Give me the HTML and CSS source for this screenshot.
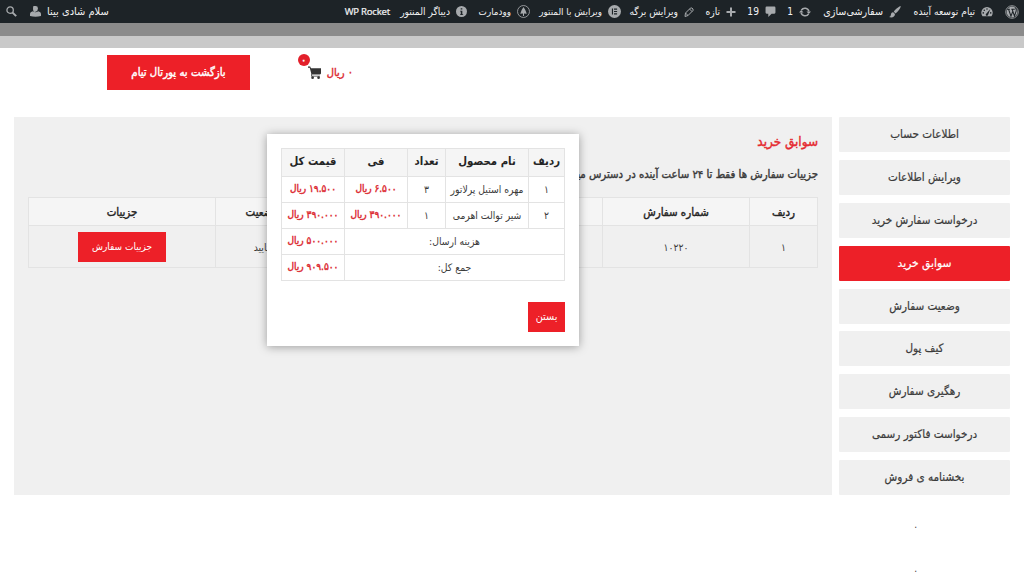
FILE: index.html
```html
<!DOCTYPE html>
<html lang="fa" dir="rtl">
<head>
<meta charset="utf-8">
<title>سوابق خرید</title>
<link rel="stylesheet" href="styles.css">
</head>
<body>
<header class="adminbar">
  <div class="item w-logo"><svg class="i14" viewBox="0 0 20 20"><circle cx="10" cy="10" r="9" fill="none" stroke="currentColor" stroke-width="1.2"/><circle cx="10" cy="10" r="7.7" fill="currentColor"/><path d="M3 6h4M9 6h5M5 6l3.5 10L11 9.500M10.200 6L13.500 16L16 8.500Q16.500 6 15 4" fill="none" stroke="#1d2327" stroke-width="1.500"/></svg></div>
  <div class="item w-site"><svg class="i12" viewBox="0 0 20 20"><path fill="currentColor" d="M2.500 17A9.500 9.500 0 1 1 17.500 17Z"/><g fill="#1d2327"><circle cx="10" cy="5" r="1.300"/><circle cx="5.500" cy="7" r="1.300"/><circle cx="3.800" cy="11.500" r="1.300"/><circle cx="16.200" cy="11.500" r="1.300"/><path d="M15.500 5l-3.600 9.500a2 2 0 1 1-2.800-2z"/></g></svg><span class="label">تیام توسعه آینده</span></div>
  <div class="item w-custom"><svg class="i12" viewBox="0 0 20 20"><path fill="currentColor" d="M19.500 0c-3 .5-9.500 6-11.500 9.500l3 3C14.500 10 19.500 4 19.500 0zM7 10.500c-3.500 0-3.500 3-4 5C2.600 17 1.500 18 0 18.500c5 1.500 10 0 10-5z"/></svg><span class="label l-custom">سفارشی‌سازی</span></div>
  <div class="item w-update"><svg class="i12" viewBox="0 0 20 20"><path fill="none" stroke="currentColor" stroke-width="2.600" d="M4 7a6.800 6.800 0 0 1 12.500 2M16 13a6.800 6.800 0 0 1-12.500-2"/><path fill="currentColor" d="M12.500 9h7.500l-3.700 4.500zM0 11h7.500L3.700 6.500z"/></svg><span class="label">1</span></div>
  <div class="item w-comment"><svg class="i11" viewBox="0 0 20 20"><path fill="currentColor" d="M3 1h14q2 0 2 2v9q0 2-2 2h-5l-6 6v-6H3q-2 0-2-2V3q0-2 2-2z"/></svg><span class="label">19</span></div>
  <div class="item w-new"><svg class="i10" viewBox="0 0 20 20"><path fill="currentColor" d="M8 1h4v7h7v4h-7v7H8v-7H1V8h7z"/></svg><span class="label">تازه</span></div>
  <div class="item w-edit"><svg class="i10" viewBox="0 0 20 20"><path fill="none" stroke="currentColor" stroke-width="2" d="M3 12L13 2q3-1 5 2v3L8 17l-6 2zM3 12l5 5M11 4l5 5"/></svg><span class="label">ویرایش برگه</span></div>
  <div class="item w-elementor"><svg class="i13" viewBox="0 0 20 20"><circle cx="10" cy="10" r="10" fill="currentColor"/><path fill="#1d2327" d="M6 5.500h1.700v9H6zM9.200 5.500H14v1.700H9.200zM9.200 9.100H14v1.700H9.200zM9.200 12.800H14v1.700H9.200z"/></svg><span class="label l-tight">ویرایش با المنتور</span></div>
  <div class="item w-woodmart"><svg class="i13" viewBox="0 0 20 20"><circle cx="10" cy="10" r="9.200" fill="none" stroke="currentColor" stroke-width="1.300"/><path fill="currentColor" d="M10 3l2.800 4.500 2.200 6-4.200-.5v4H9.200v-4L5 13.500l2.200-6z"/></svg><span class="label l-tight">وودمارت</span></div>
  <div class="item w-debug"><svg class="i11" viewBox="0 0 20 20"><circle cx="10" cy="10" r="10" fill="currentColor"/><path fill="#1d2327" d="M8.500 4h3v2.500h-3zM7.500 8.500h4V15H13v1.500H7.500V15h1.200v-5H7.500z"/></svg><span class="label">دیباگر المنتور</span></div>
  <div class="item"><span class="label l-rocket" dir="ltr">WP Rocket</span></div>
  <div class="item account"><span class="label l-hello">سلام شادی بینا</span><svg class="i11" viewBox="0 0 20 20"><path fill="currentColor" d="M10 0q4.500 0 4.500 4.500T10 10.500 5.500 4.500 10 0zM0 18v-4q0-3.500 5-4.500 5 4 10 0 5 1 5 4.500v4q-10 3-20 0z"/></svg></div>
  <div class="item search"><svg class="i11" viewBox="0 0 20 20"><circle cx="7.500" cy="7.500" r="5.800" fill="none" stroke="currentColor" stroke-width="2.400"/><path d="M12 12l6.500 6.500" stroke="currentColor" stroke-width="3.500"/></svg></div>
</header>
<div class="band band-dark"></div>
<div class="band band-light"></div>
<div class="shop-head">
  <a class="cart"><span class="cart-total red">۰ ریال</span>
    <span class="cart-icon"><svg viewBox="0 0 24 24"><path fill="#333" d="M0 1h4l1.500 3H24v9.500q0 2-2 2H7.500V18H22v1.500H6V14L3.200 3H0z"/><circle cx="8.500" cy="21.500" r="2.500" fill="#333"/><circle cx="19.500" cy="21.500" r="2.500" fill="#333"/></svg><span class="badge">۰</span></span>
  </a>
  <a class="portal">بازگشت به پورتال تیام</a>
</div>
<main class="layout">
  <nav class="menu">
    <a>اطلاعات حساب</a><a>ویرایش اطلاعات</a><a>درخواست سفارش خرید</a><a class="active">سوابق خرید</a><a>وضعیت سفارش</a><a>کیف پول</a><a>رهگیری سفارش</a><a>درخواست فاکتور رسمی</a><a>بخشنامه ی فروش</a>
  </nav>
  <section class="panel">
    <h1>سوابق خرید</h1>
    <p class="note">جزییات سفارش ها فقط تا ۲۴ ساعت آینده در دسترس میباشد</p>
    <table class="orders">
      <colgroup><col class="o1"><col class="o2"><col class="o3"><col class="o4"><col class="o5"></colgroup>
      <tr><th>ردیف</th><th>شماره سفارش</th><th></th><th>وضعیت</th><th>جزییات</th></tr>
      <tr><td>۱</td><td>۱۰۲۲۰</td><td></td><td>تایید</td><td><a class="btn details">جزییات سفارش</a></td></tr>
    </table>
    <div class="modal">
      <table class="lines">
        <colgroup><col class="c1"><col class="c2"><col class="c3"><col class="c4"><col class="c5"></colgroup>
        <tr><th>ردیف</th><th>نام محصول</th><th>تعداد</th><th>فی</th><th>قیمت کل</th></tr>
        <tr><td>۱</td><td>مهره استیل پرلاتور</td><td>۳</td><td class="red">۶.۵۰۰ ریال</td><td class="red">۱۹.۵۰۰ ریال</td></tr>
        <tr><td>۲</td><td>شیر توالت اهرمی</td><td>۱</td><td class="red">۳۹۰.۰۰۰ ریال</td><td class="red">۳۹۰.۰۰۰ ریال</td></tr>
        <tr><td colspan="4">هزینه ارسال:</td><td class="red">۵۰۰.۰۰۰ ریال</td></tr>
        <tr><td colspan="4">جمع کل:</td><td class="red">۹۰۹.۵۰۰ ریال</td></tr>
      </table>
      <a class="btn close">بستن</a>
    </div>
  </section>
</main>
<footer class="dots"><p>.</p><p>.</p></footer>
</body>
</html>
```
FILE: styles.css
```css
* { box-sizing: border-box; }
body { margin: 0; width: 1024px; height: 583px; overflow: hidden; background: #fff; color: #3b3b3b; font: 10px "DejaVu Sans Condensed", "DejaVu Sans", sans-serif; font-stretch: condensed; }
svg { display: block; flex: none; }
.adminbar { display: flex; height: 23px; padding: 0 5px 0 6px; background: #1d2327; color: #a7aaad; align-items: center; }
.item { display: flex; align-items: center; gap: 6px; flex: none; white-space: nowrap; }
.label { color: #f0f0f1; font-size: 10.2px; line-height: 23px; }
.l-custom { font-size: 10.7px; }
.l-tight { font-size: 9.8px; }
.i14 { width: 14px; height: 14px; }
.i13 { width: 13px; height: 13px; }
.i12 { width: 12px; height: 12px; }
.i11 { width: 11px; height: 11px; }
.i10 { width: 10px; height: 10px; }
.w-logo { width: 26px; }
.w-site { width: 92px; }
.w-custom { width: 90px; }
.w-update { width: 35px; }
.w-comment { width: 40px; }
.w-new { width: 42px; }
.w-edit { width: 73px; }
.w-elementor { width: 91px; }
.w-woodmart { width: 63px; }
.w-debug { width: 77px; }
.l-rocket { font-family: "Noto Sans", "Open Sans", sans-serif; font-size: 9.5px; letter-spacing: -0.2px; font-stretch: normal; -webkit-text-stroke: 0.2px currentColor; }
.l-hello { font-size: 11px; }
.account { margin-right: auto; }
.search { margin-right: 13px; }
.band-dark { height: 13px; background: #8b8b8b; }
.band-light { height: 12px; background: #c9c9c9; }
.shop-head { display: flex; height: 69px; padding: 7px 671px 0 107px; justify-content: space-between; }
.cart { display: flex; gap: 6px; height: 35px; align-items: center; }
.cart-total { font-size: 11px; white-space: nowrap; }
.cart-icon { position: relative; width: 13px; }
.cart-icon svg { width: 13px; height: 13px; }
.badge { position: absolute; left: -10px; top: -12px; width: 12px; height: 12px; border-radius: 50%; background: #e3202b; color: #fff; font-size: 10px; line-height: 11px; text-align: center; -webkit-text-stroke: 0.6px currentColor; }
.red { color: #dc2a31; }
.cart-total, .portal, .active, .panel h1, .note, .orders th, td.red { -webkit-text-stroke: 0.4px currentColor; font-weight: normal; }
.portal { width: 143px; height: 35px; background: #ed2028; color: #fff; font-size: 11.3px; line-height: 35px; text-align: center; white-space: nowrap; }
.layout { display: flex; gap: 7px; padding: 0 14px; height: 378px; }
.menu { width: 171px; display: flex; flex-direction: column; justify-content: space-between; }
.menu a { height: 35px; background: #f0f0f0; border-radius: 1px; line-height: 35px; text-align: center; font-size: 11.6px; white-space: nowrap; -webkit-text-stroke: 0.2px currentColor; }
.menu .active { background: #ed2028; color: #fff; font-size: 11.9px; }
.panel { position: relative; width: 818px; padding: 14px; background: #f0f0f0; }
.panel h1 { margin: 0; height: 20px; color: #e52a31; font-size: 13.4px; line-height: 21px; }
.note { margin: 13px 0 13px; height: 20px; font-size: 11.3px; line-height: 21px; }
table { border-collapse: collapse; table-layout: fixed; }
th, td { padding: 0; border: 1px solid #e3e3e3; text-align: center; white-space: nowrap; overflow: hidden; }
th { background: #f5f5f5; color: #252525; font-size: 11.3px; }
td { font-size: 10.3px; }
.lines th, .lines td { padding-bottom: 2px; }
td.red { font-size: 10px; }
.orders { width: 789px; }
.orders th { font-size: 11.4px; }
.orders tr:first-child { height: 28px; }
.orders tr + tr { height: 42px; }
.o1 { width: 68px; }
.o2 { width: 147px; }
.o3 { width: 295px; }
.o4 { width: 92px; }
.o5 { width: 187px; }
.btn { display: block; background: #ed2028; color: #fff; text-align: center; white-space: nowrap; font-size: 10px; height: 30px; line-height: 29px; }
.details { width: 88px; margin: 0 auto; }
.modal { position: absolute; left: 253px; top: 17px; width: 312px; height: 212px; padding: 14px; background: #fff; box-shadow: 0 1px 9px rgba(0,0,0,.35); }
.lines { width: 283px; }
.lines tr { height: 26px; }
.lines tr:first-child { height: 28px; }
.c1 { width: 36px; }
.c2 { width: 83px; }
.c3 { width: 38px; }
.c4 { width: 63px; }
.c5 { width: 63px; }
.close { width: 37px; margin-top: 21px; font-size: 10.8px; }
.dots { padding-right: 107px; font-size: 10px; }
.dots p { margin: 0; height: 44px; line-height: 59px; }
```
